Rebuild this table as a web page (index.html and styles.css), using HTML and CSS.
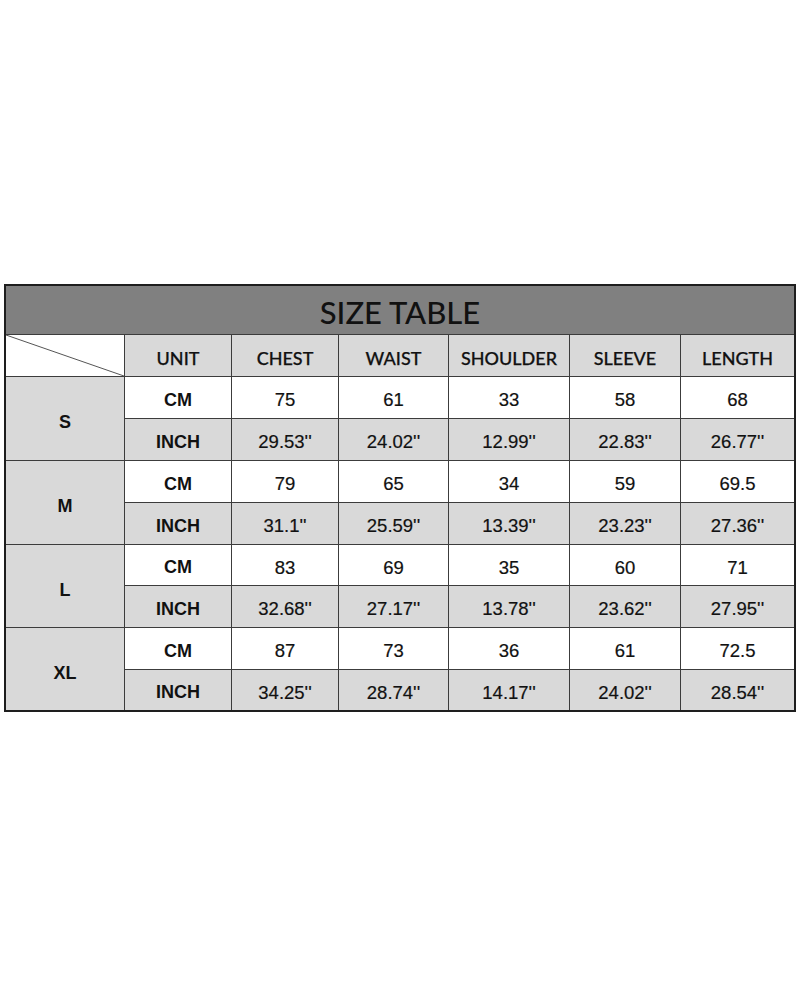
FILE: index.html
```html
<!DOCTYPE html>
<html>
<head>
<meta charset="utf-8">
<link rel="stylesheet" href="styles.css">
</head>
<body>
<div class="table">
  <div class="title">SIZE TABLE</div>
  <div class="corner"><svg class="diag" viewBox="0 0 100 100" preserveAspectRatio="none"><line x1="0" y1="0" x2="100" y2="100" vector-effect="non-scaling-stroke"/></svg></div>
  <div class="hd">UNIT</div>
  <div class="hd">CHEST</div>
  <div class="hd">WAIST</div>
  <div class="hd">SHOULDER</div>
  <div class="hd">SLEEVE</div>
  <div class="hd">LENGTH</div>

  <div class="size">S</div>
  <div class="unit w">CM</div><div class="v w">75</div><div class="v w">61</div><div class="v w">33</div><div class="v w">58</div><div class="v w">68</div>
  <div class="unit g">INCH</div><div class="v g">29.53''</div><div class="v g">24.02''</div><div class="v g">12.99''</div><div class="v g">22.83''</div><div class="v g">26.77''</div>

  <div class="size">M</div>
  <div class="unit w">CM</div><div class="v w">79</div><div class="v w">65</div><div class="v w">34</div><div class="v w">59</div><div class="v w">69.5</div>
  <div class="unit g">INCH</div><div class="v g">31.1''</div><div class="v g">25.59''</div><div class="v g">13.39''</div><div class="v g">23.23''</div><div class="v g">27.36''</div>

  <div class="size">L</div>
  <div class="unit w">CM</div><div class="v w">83</div><div class="v w">69</div><div class="v w">35</div><div class="v w">60</div><div class="v w">71</div>
  <div class="unit g">INCH</div><div class="v g">32.68''</div><div class="v g">27.17''</div><div class="v g">13.78''</div><div class="v g">23.62''</div><div class="v g">27.95''</div>

  <div class="size">XL</div>
  <div class="unit w">CM</div><div class="v w">87</div><div class="v w">73</div><div class="v w">36</div><div class="v w">61</div><div class="v w">72.5</div>
  <div class="unit g">INCH</div><div class="v g">34.25''</div><div class="v g">28.74''</div><div class="v g">14.17''</div><div class="v g">24.02''</div><div class="v g">28.54''</div>
</div>
</body>
</html>
```
FILE: styles.css
```css
html, body {
  margin: 0;
  padding: 0;
  background: #ffffff;
}
body {
  padding: 284px 4px 0 4px;
}
.table {
  width: 792px;
  box-sizing: border-box;
  display: grid;
  grid-template-columns: 118px 106px 106px 109px 120px 110px 113px;
  grid-template-rows: 48px 41px 41px 41px 41px 41px 40px 41px 41px 40px;
  gap: 1px;
  background: #3c3c3c;
  border: 2px solid #1e1e1e;
  color: #111111;
}
.table > div {
  display: flex;
  align-items: center;
  justify-content: center;
  box-sizing: border-box;
}
.title {
  grid-column: 1 / span 7;
  background: #808080;
  font-family: Lato, "Open Sans", sans-serif;
  font-size: 31px;
  font-weight: 500;
  padding-top: 4px;
}
.corner {
  background: #ffffff;
  position: relative;
}
.diag {
  position: absolute;
  left: 0;
  top: 0;
  width: 100%;
  height: 100%;
}
.diag line {
  stroke: #555555;
  stroke-width: 1;
}
.hd {
  background: #d9d9d9;
  font-family: Lato, "Open Sans", sans-serif;
  font-size: 18px;
  font-weight: 500;
  padding-top: 4px;
  -webkit-text-stroke: 0.25px #111111;
}
.size {
  grid-row: span 2;
  background: #d9d9d9;
  font-family: "Liberation Sans", Arial, sans-serif;
  font-size: 18px;
  font-weight: bold;
  padding-top: 8px;
}
.unit {
  font-family: "Liberation Sans", Arial, sans-serif;
  font-size: 18px;
  font-weight: bold;
  padding-top: 5px;
}
.v {
  font-family: "Liberation Sans", Arial, sans-serif;
  font-size: 18.5px;
  padding-top: 5px;
  -webkit-text-stroke: 0.2px #111111;
}
.w { background: #ffffff; }
.g { background: #d9d9d9; }
```
